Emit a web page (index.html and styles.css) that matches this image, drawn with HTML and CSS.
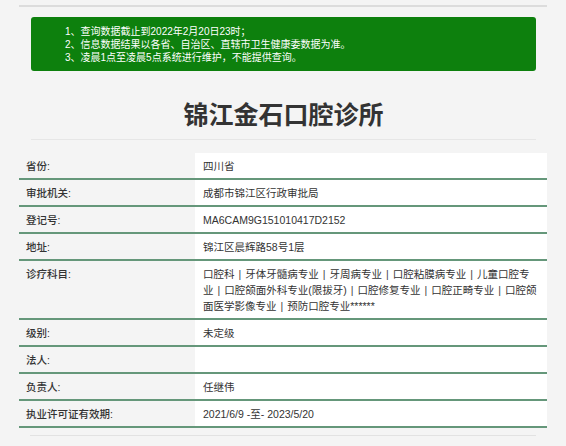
FILE: index.html
```html
<!DOCTYPE html>
<html lang="zh">
<head>
<meta charset="utf-8">
<link rel="stylesheet" href="styles.css">
</head>
<body>
<div class="page">
  <div class="topline"></div>
  <div class="notice">
    <p>1、查询数据截止到2022年2月20日23时；</p>
    <p>2、信息数据结果以各省、自治区、直辖市卫生健康委数据为准。</p>
    <p>3、凌晨1点至凌晨5点系统进行维护，不能提供查询。</p>
  </div>
  <h1 class="title">锦江金石口腔诊所</h1>
  <div class="table">
    <div class="row"><div class="label">省份:</div><div class="value">四川省</div></div>
    <div class="row"><div class="label">审批机关:</div><div class="value">成都市锦江区行政审批局</div></div>
    <div class="row"><div class="label">登记号:</div><div class="value">MA6CAM9G151010417D2152</div></div>
    <div class="row"><div class="label">地址:</div><div class="value">锦江区晨辉路58号1层</div></div>
    <div class="row"><div class="label">诊疗科目:</div><div class="value">口腔科<span class="sep">|</span>牙体牙髓病专业<span class="sep">|</span>牙周病专业<span class="sep">|</span>口腔粘膜病专业<span class="sep">|</span>儿童口腔专业<span class="sep">|</span>口腔颌面外科专业(限拔牙)<span class="sep">|</span>口腔修复专业<span class="sep">|</span>口腔正畸专业<span class="sep">|</span>口腔颌面医学影像专业<span class="sep">|</span>预防口腔专业******</div></div>
    <div class="row"><div class="label">级别:</div><div class="value">未定级</div></div>
    <div class="row"><div class="label">法人:</div><div class="value"></div></div>
    <div class="row"><div class="label">负责人:</div><div class="value">任继伟</div></div>
    <div class="row"><div class="label">执业许可证有效期:</div><div class="value">2021/6/9 -至- 2023/5/20</div></div>
  </div>
  <div class="bottomline"></div>
</div>
</body>
</html>
```
FILE: styles.css
```css
html, body {
  margin: 0;
  padding: 0;
  background: #f4f4f4;
}
body {
  font-family: "Liberation Sans", "Noto Sans CJK SC", sans-serif;
  color: #333;
}
.page {
  width: 528px;
  margin-left: 19px;
  padding-top: 5px;
}
.topline {
  height: 2px;
  background: #dcdcdc;
}
.notice {
  margin: 10px 11px 0 12px;
  background: #0d800d;
  border-radius: 3px;
  color: #fff;
  font-size: 10px;
  line-height: 13px;
  padding: 7.5px 0 7.5px 34px;
}
.notice p {
  margin: 0;
}
.title {
  margin: 26.5px 11px 0 12px;
  padding-bottom: 7.5px;
  border-bottom: 1px solid #e6e6e6;
  text-align: center;
  font-size: 25px;
  line-height: 34px;
  font-weight: 700;
  color: #333;
}
.table {
  margin-top: 13px;
}
.row {
  display: flex;
  border-bottom: 2px solid #65977a;
  font-size: 10.5px;
  line-height: 16px;
}
.label {
  width: 169px;
  flex: none;
  padding: 5px 0 4px 7px;
  font-weight: 500;
  color: #333;
}
.value {
  flex: 1;
  background: #fff;
  padding: 5px 9px 4px 8px;
  color: #333;
}
.sep {
  display: inline-block;
  height: 16px;
  line-height: 16px;
  vertical-align: top;
  padding: 0 4px;
  color: #444;
}
.bottomline {
  margin: 7px 11px 0 11px;
  height: 1px;
  background: #e2e2e2;
}
```
